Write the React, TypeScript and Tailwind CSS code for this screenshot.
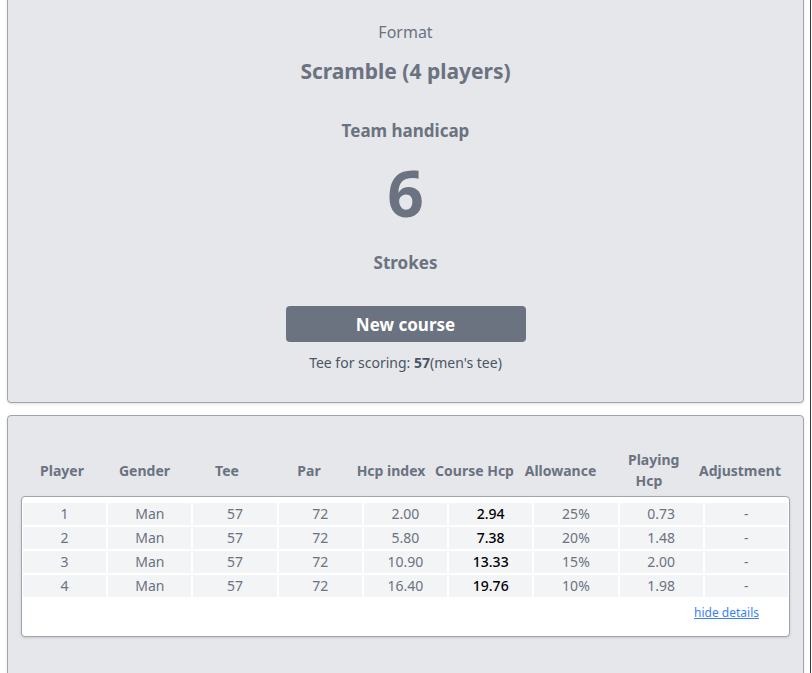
import React from 'react';

const headers = ['Player', 'Gender', 'Tee', 'Par', 'Hcp index', 'Course Hcp', 'Allowance', 'Playing Hcp', 'Adjustment'];

const rows = [
  ['1', 'Man', '57', '72', '2.00', '2.94', '25%', '0.73', '-'],
  ['2', 'Man', '57', '72', '5.80', '7.38', '20%', '1.48', '-'],
  ['3', 'Man', '57', '72', '10.90', '13.33', '15%', '2.00', '-'],
  ['4', 'Man', '57', '72', '16.40', '19.76', '10%', '1.98', '-'],
];

const App: React.FC = () => {
  return (
    <div className="w-[811px] min-h-[673px] bg-white border-r border-[#3a3a3a] pl-[7px] pr-[6px] font-['Noto_Sans',sans-serif] text-[#6b7280]">
      {/* Summary card */}
      <div className="-mt-[10px] bg-[#e5e7eb] border border-[#a1a5ad] rounded shadow-sm pt-[29px] pb-[29px] flex flex-col items-center">
        <div className="text-base leading-6">Format</div>
        <div className="mt-[13px] text-[21px] leading-7 font-bold">Scramble (4 players)</div>
        <div className="mt-[34px] text-[17px] leading-6 font-bold">Team handicap</div>
        <div className="mt-[18px] text-[64px] leading-[64px] font-bold">6</div>
        <div className="mt-[26px] text-[17px] leading-6 font-bold">Strokes</div>
        <button className="mt-[31px] w-[240px] h-[36px] pt-[2px] rounded bg-[#6b7280] text-white text-[17px] font-bold">
          New course
        </button>
        <div className="mt-[11px] text-sm leading-5 text-[#4b5563]">
          Tee for scoring: <span className="font-bold">57</span>(men's tee)
        </div>
      </div>

      {/* Details card */}
      <div className="mt-[12px] bg-[#e5e7eb] border border-[#a1a5ad] rounded shadow-sm pt-[33px] pb-[40px] px-[13px]">
        <div className="grid grid-cols-[82px_83px_82px_82px_82px_85px_87px_90px_92px] h-[42px] items-center text-sm leading-[21px] font-bold text-center">
          {headers.map((h) => (
            <div key={h} className={h === 'Playing Hcp' ? 'px-6' : ''}>
              {h}
            </div>
          ))}
        </div>

        <div className="mt-[5px] bg-white border border-[#a1a5ad] rounded shadow-sm pt-[6px] px-[1px] pb-[14px]">
          <div className="flex flex-col gap-[2px]">
            {rows.map((r) => (
              <div key={r[0]} className="grid grid-cols-9 gap-[2px]">
                {r.map((c, i) => (
                  <div
                    key={i}
                    className={`h-[22px] bg-[#f3f4f6] text-center text-sm leading-[22px] ${i === 5 ? 'text-black font-medium' : ''}`}
                  >
                    {c}
                  </div>
                ))}
              </div>
            ))}
          </div>
          <div className="flex justify-end pr-[29px] mt-[7px]">
            <a href="#" className="text-xs leading-[18px] text-[#3b82f6] underline">
              hide details
            </a>
          </div>
        </div>
      </div>
    </div>
  );
};

export default App;
